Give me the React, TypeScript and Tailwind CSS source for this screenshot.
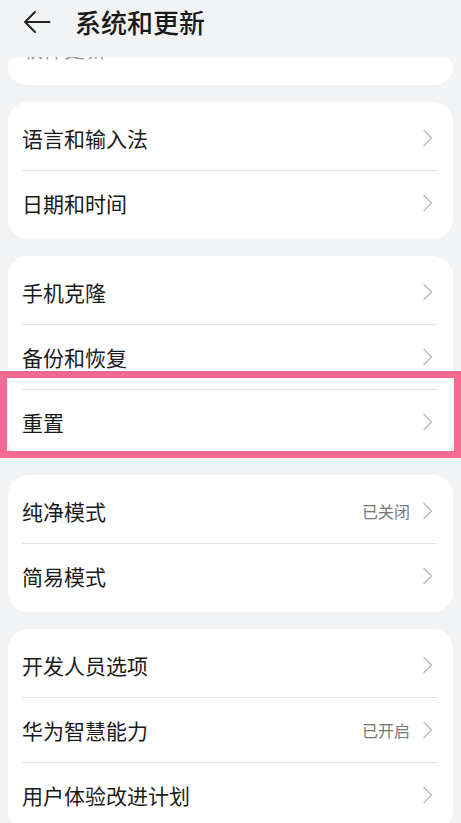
import React from "react";

type Item = { label: string; value?: string };

const groups: Item[][] = [
  [{ label: "语言和输入法" }, { label: "日期和时间" }],
  [{ label: "手机克隆" }, { label: "备份和恢复" }, { label: "重置" }],
  [{ label: "纯净模式", value: "已关闭" }, { label: "简易模式" }],
  [
    { label: "开发人员选项" },
    { label: "华为智慧能力", value: "已开启" },
    { label: "用户体验改进计划" },
  ],
];

function Chevron() {
  return (
    <svg width="12" height="20" viewBox="0 0 12 20" fill="none">
      <path
        d="M2 2.5 L9.5 10 L2 17.5"
        stroke="#bdbdbd"
        strokeWidth="1.6"
        strokeLinecap="round"
        strokeLinejoin="round"
      />
    </svg>
  );
}

function Row({ item }: { item: Item }) {
  return (
    <div className="flex h-[64px] items-center justify-between pl-[14px] pr-[19px]">
      <span className="text-[21px] leading-none text-[#1a1a1a]">{item.label}</span>
      <div className="flex items-center gap-[12px]">
        {item.value && (
          <span className="text-[16px] leading-none text-[#777]">{item.value}</span>
        )}
        <Chevron />
      </div>
    </div>
  );
}

export default function App() {
  return (
    <div className="min-h-[823px] overflow-hidden bg-[#f1f3f5] font-['Noto_Sans_CJK_SC','Noto_Sans',sans-serif]">
      {/* Header */}
      <div className="flex h-[57px] items-start px-[23px] pt-[6px]">
        <div className="flex h-[32px] items-center gap-[24px]">
          <svg width="28" height="24" viewBox="0 0 28 24" fill="none">
            <path
              d="M26.5 12 H2.5 M12 2 L2 12 L12 22"
              stroke="#222"
              strokeWidth="2"
              strokeLinecap="round"
              strokeLinejoin="round"
            />
          </svg>
          <span className="text-[26px] font-medium leading-none text-[#1a1a1a]">系统和更新</span>
        </div>
      </div>

      <div className="flex flex-col gap-[17px] px-[8px]">
        {/* scrolled-away card, only its lower edge is still visible */}
        <div className="h-[28px] overflow-hidden rounded-b-[20px] rounded-t-[10px] bg-white">
          <div className="h-[3px] overflow-hidden pl-[14px]">
            <div className="-mt-[19px] text-[21px] leading-none text-[#9a9a9a]">软件更新</div>
          </div>
        </div>

        {groups.map((group, gi) => (
          <div key={gi} className="relative rounded-[20px] bg-white py-[4px]">
            {group.map((item, i) => (
              <div key={item.label}>
                {i > 0 && <div className="ml-[14px] mr-[16px] h-px bg-[#e4e4e4]" />}
                <Row item={item} />
              </div>
            ))}
            {gi === 1 && (
              <div className="pointer-events-none absolute -left-[8px] -right-[8px] top-[115px] h-[87px] border-[7px] border-[#f36b93]" />
            )}
          </div>
        ))}
      </div>
    </div>
  );
}
